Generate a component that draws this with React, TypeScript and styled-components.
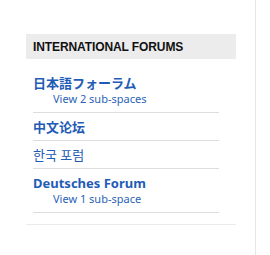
import React from "react";
import styled, { createGlobalStyle } from "styled-components";

const Global = createGlobalStyle`
  html, body { margin: 0; padding: 0; background: #fff; }
  body { font-family: "Noto Sans", "Noto Sans CJK JP", sans-serif; }
`;

const Page = styled.div`
  width: 256px;
  min-height: 255px;
  border-right: 1px solid #e6e6e6;
  box-sizing: border-box;
  padding: 34px 0 0 26px;
`;

const Panel = styled.section`
  width: 210px;
  border-bottom: 1px solid #ebebeb;
  padding-bottom: 11px;
`;

const Header = styled.h2`
  margin: 0;
  height: 25px;
  background: #ececec;
  padding-left: 7px;
  display: flex;
  align-items: center;
  font-family: "Liberation Sans", Arial, sans-serif;
  font-weight: bold;
  font-size: 12px;
  color: #111;
  letter-spacing: -0.1px;
`;

const List = styled.ul`
  list-style: none;
  margin: 0;
  padding: 10px 17px 0 7px;
`;

const Item = styled.li`
  padding: 6px 0 5px;
  border-bottom: 1px solid #dddddd;
  display: flex;
  flex-direction: column;
`;

const Title = styled.a<{ $bold?: boolean }>`
  font-family: "Noto Sans", "Noto Sans CJK JP", "Noto Sans CJK SC", "Noto Sans CJK KR", sans-serif;
  font-size: 13px;
  line-height: 16px;
  font-weight: ${(p) => (p.$bold ? "bold" : "normal")};
  color: #1f5cb6;
  text-decoration: none;
`;

const Sub = styled.a`
  font-family: "Noto Sans", sans-serif;
  font-size: 11px;
  line-height: 16px;
  color: #2b63b6;
  padding-left: 20px;
  text-decoration: none;
`;

const forums = [
  { title: "日本語フォーラム", sub: "View 2 sub-spaces", bold: true },
  { title: "中文论坛", bold: true },
  { title: "한국 포럼", bold: false },
  { title: "Deutsches Forum", sub: "View 1 sub-space", bold: true },
];

export default function App() {
  return (
    <>
      <Global />
      <Page>
        <Panel>
          <Header>INTERNATIONAL FORUMS</Header>
          <List>
            {forums.map((f) => (
              <Item key={f.title}>
                <Title $bold={f.bold}>{f.title}</Title>
                {f.sub && <Sub>{f.sub}</Sub>}
              </Item>
            ))}
          </List>
        </Panel>
      </Page>
    </>
  );
}
